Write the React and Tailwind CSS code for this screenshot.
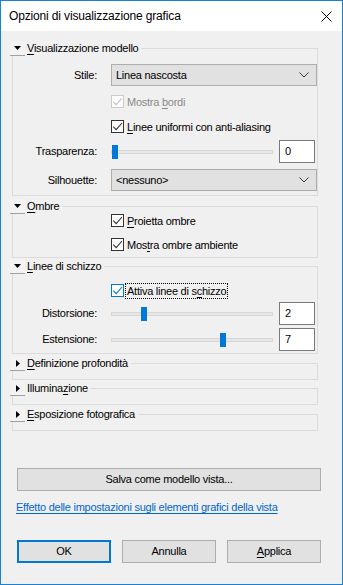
function Chevron() {
  return (
    <svg width="10" height="6" viewBox="0 0 10 6" className="shrink-0">
      <path d="M0.5 0.5 L5 5 L9.5 0.5" fill="none" stroke="#333" strokeWidth="1" />
    </svg>
  );
}

function Select({ value }) {
  return (
    <div className="flex h-[22px] w-[206px] items-center justify-between border border-[#adadad] bg-[#e1e1e1] pl-[4px] pr-[7px]">
      <span>{value}</span>
      <Chevron />
    </div>
  );
}

function CheckMark({ color }) {
  return (
    <svg width="11" height="11" viewBox="0 0 11 11">
      <path d="M1.2 5.6 L4.2 8.6 L10 2" fill="none" stroke={color} strokeWidth="1.1" />
    </svg>
  );
}

function Check({ label, u, disabled, blue, focus }) {
  const i = label.indexOf(u);
  return (
    <div className="flex h-[13px] items-center">
      <div
        className={`flex h-[13px] w-[13px] shrink-0 items-center justify-center border bg-white ${
          disabled ? "border-[#cccccc]" : blue ? "border-[#0078d7]" : "border-[#333333]"
        }`}
      >
        <CheckMark color={disabled ? "#bfbfbf" : blue ? "#0078d7" : "#333333"} />
      </div>
      <span
        className={`ml-[2px] px-[1px] leading-[14px] ${disabled ? "text-[#8a8a8a]" : "text-black"} ${
          focus ? "outline outline-1 outline-dotted outline-black" : ""
        }`}
      >
        {label.slice(0, i)}
        <span className="underline underline-offset-2">{u}</span>
        {label.slice(i + u.length)}
      </span>
    </div>
  );
}

function Slider({ pos }) {
  return (
    <div className="flex h-[22px] w-[162px] items-center">
      <div className="flex h-[4px] w-full items-center border border-[#d6d6d6] bg-[#e7e7e7]">
        <div style={{ width: pos }} className="h-[1px] shrink-0" />
        <div className="h-[14px] w-[6px] shrink-0 bg-[#0078d7]" />
      </div>
    </div>
  );
}

function NumBox({ value }) {
  return (
    <div className="flex h-[23px] w-[36px] items-center border border-[#7a7a7a] bg-white pl-[5px]">
      {value}
    </div>
  );
}

function Label({ children }) {
  return <div className="w-[85px] shrink-0 pr-[1px] text-right">{children}</div>;
}

function Group({ title, u, open, children }) {
  const i = title.indexOf(u);
  return (
    <div className="flex flex-col">
      <div className="flex h-[15px]">
        <div className="flex h-[15px] w-[15px] shrink-0 items-center justify-center border-b border-[#a0a0a0] bg-[#f3f3f3]">
          {open ? (
            <svg width="7" height="4" viewBox="0 0 7 4">
              <path d="M0 0 H7 L3.5 4 Z" fill="#000" />
            </svg>
          ) : (
            <svg width="4" height="7" viewBox="0 0 4 7">
              <path d="M0 0 V7 L4 3.5 Z" fill="#000" />
            </svg>
          )}
        </div>
        <span className="ml-[2px] pr-[3px] leading-[14px]">
          {title.slice(0, i)}
          <span className="underline underline-offset-2">{u}</span>
          {title.slice(i + u.length)}
        </span>
        <div className="mt-[7px] flex-1 border-r border-t border-[#dcdcdc]" />
      </div>
      <div className="ml-[2px] border-b border-l border-r border-[#dcdcdc]">
        {children || <div className="h-[8px]" />}
      </div>
    </div>
  );
}

function Btn({ children, def }) {
  return (
    <div
      className={`flex h-[23px] w-[94px] items-center justify-center bg-[#e1e1e1] ${
        def ? "border-2 border-[#0078d7]" : "border border-[#adadad]"
      }`}
    >
      {children}
    </div>
  );
}

export default function App() {
  return (
    <div className="flex h-[585px] w-[343px] flex-col border border-[#1a80d6] bg-[#f0f0f0] font-['Liberation_Sans',sans-serif] text-[11px] tracking-[-0.25px] text-black">
      <div className="flex h-[30px] shrink-0 items-center justify-between bg-white pl-[8px] pr-[10px]">
        <span className="text-[12px] tracking-[-0.15px]">Opzioni di visualizzazione grafica</span>
        <svg width="11" height="11" viewBox="0 0 11 11">
          <path d="M0.5 0.5 L10.5 10.5 M10.5 0.5 L0.5 10.5" stroke="#000" strokeWidth="1" />
        </svg>
      </div>

      <div className="flex w-[317px] flex-col pl-[9px] pt-[10px]">
        <Group title="Visualizzazione modello" u="V" open>
          <div className="flex flex-col pb-[4px] pt-[8px]">
            <div className="flex items-center">
              <Label>Stile:</Label>
              <div className="ml-[13px]">
                <Select value="Linea nascosta" />
              </div>
            </div>
            <div className="ml-[98px] mt-[9px]">
              <Check label="Mostra bordi" u="b" disabled />
            </div>
            <div className="ml-[98px] mt-[12px]">
              <Check label="Linee uniformi con anti-aliasing" u="L" />
            </div>
            <div className="mt-[7px] flex items-center">
              <Label>Trasparenza:</Label>
              <div className="ml-[13px]">
                <Slider pos={0} />
              </div>
              <div className="ml-[6px]">
                <NumBox value="0" />
              </div>
            </div>
            <div className="mt-[6px] flex items-center">
              <Label>Silhouette:</Label>
              <div className="ml-[13px]">
                <Select value="<nessuno>" />
              </div>
            </div>
          </div>
        </Group>

        <div className="mt-[3px]">
          <Group title="Ombre" u="O" open>
            <div className="flex flex-col pb-[6px] pl-[98px] pt-[0px]">
              <Check label="Proietta ombre" u="P" />
              <div className="mt-[11px]">
                <Check label="Mostra ombre ambiente" u="t" />
              </div>
            </div>
          </Group>
        </div>

        <div className="mt-[1px]">
          <Group title="Linee di schizzo" u="L" open>
            <div className="flex flex-col pb-[2px] pt-[10px]">
              <div className="ml-[98px]">
                <Check label="Attiva linee di schizzo" u="c" blue focus />
              </div>
              <div className="mt-[5px] flex items-center">
                <Label>Distorsione:</Label>
                <div className="ml-[13px]">
                  <Slider pos={29} />
                </div>
                <div className="ml-[6px]">
                  <NumBox value="2" />
                </div>
              </div>
              <div className="mt-[3px] flex items-center">
                <Label>Estensione:</Label>
                <div className="ml-[13px]">
                  <Slider pos={108} />
                </div>
                <div className="ml-[6px]">
                  <NumBox value="7" />
                </div>
              </div>
            </div>
          </Group>
        </div>

        <div className="mt-[2px]">
          <Group title="Definizione profondità" u="D" />
        </div>
        <div className="mt-[1px]">
          <Group title="Illuminazione" u="z" />
        </div>
        <div className="mt-[2px]">
          <Group title="Esposizione fotografica" u="E" />
        </div>
      </div>

      <div className="ml-[16px] mt-[37px] flex h-[23px] w-[304px] shrink-0 items-center justify-center border border-[#adadad] bg-[#e1e1e1]">
        Salva come modello vista...
      </div>

      <div className="ml-[15px] mt-[9px] leading-[14px] text-[#0066cc] underline underline-offset-2">
        Effetto delle impostazioni sugli elementi grafici della vista
      </div>

      <div className="ml-[16px] mt-[26px] flex gap-[11px]">
        <Btn def>OK</Btn>
        <Btn>Annulla</Btn>
        <Btn>
          <span>
            <span className="underline underline-offset-2">A</span>pplica
          </span>
        </Btn>
      </div>
    </div>
  );
}
